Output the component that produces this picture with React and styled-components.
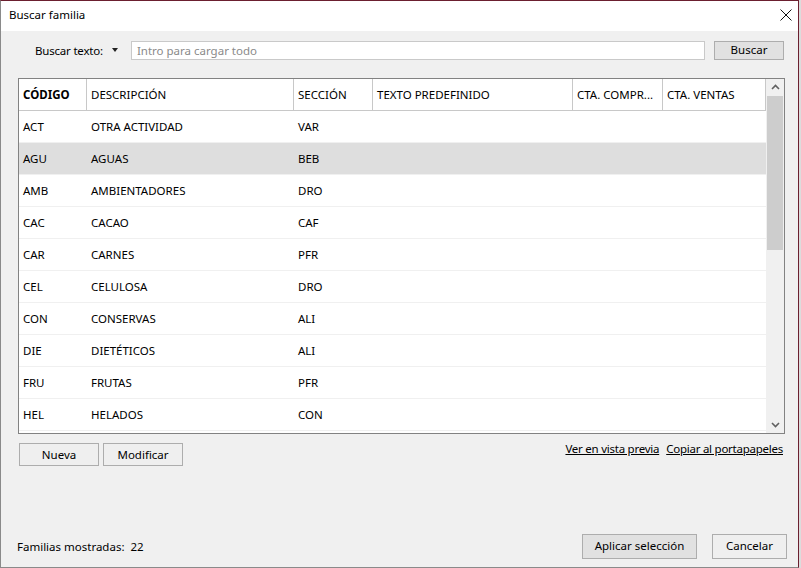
import React from 'react'
import styled, { createGlobalStyle } from 'styled-components'

const GlobalStyle = createGlobalStyle`
  html, body { margin: 0; padding: 0; background: #dcdcdc; }
  body { font-family: "Noto Sans", "Open Sans", sans-serif; font-size: 12px; color: #000; }
  * { box-sizing: border-box; }
`

const Window = styled.div`
  width: 799px;
  height: 568px;
  display: flex;
  flex-direction: column;
  background: #f0f0f0;
  border-left: 1px solid #8a8a8a;
  border-bottom: 1px solid #8a8a8a;
  border-top: 1px solid #6b1f2f;
  border-right: 1px solid #6b1f2f;
`

const TitleBar = styled.div`
  height: 30px;
  flex: none;
  background: #fff;
  display: flex;
  align-items: center;
  justify-content: space-between;
  padding: 0 6px 3px 8px;
  font-size: 11.5px;
`

const Close = styled.svg`
  width: 12px;
  height: 12px;
`

const Body = styled.div`
  flex: 1;
  display: flex;
  flex-direction: column;
  padding: 9px 12px 0 17px;
`

const SearchRow = styled.div`
  display: flex;
  align-items: center;
  height: 20px;
  padding-left: 17px;
  margin-bottom: 18px;
  margin-right: 2px;
`

const Label = styled.span`
  font-size: 11.5px;
  letter-spacing: -0.2px;
  margin-right: 9px;
`

const Caret = styled.span`
  width: 0;
  height: 0;
  border-left: 3px solid transparent;
  border-right: 3px solid transparent;
  border-top: 4px solid #222;
  margin-right: 13px;
`

const Input = styled.div`
  flex: 1;
  height: 19px;
  background: #fff;
  border: 1px solid #c9c9c9;
  display: flex;
  align-items: center;
  padding-left: 5px;
  color: #8a8a8a;
  font-size: 11.5px;
  margin-right: 9px;
`

const Button = styled.button`
  font-family: inherit;
  font-size: 11.5px;
  line-height: 1;
  color: #000;
  height: ${({ h }) => h || 22}px;
  width: ${({ w }) => w}px;
  flex: none;
  padding: 0;
  background: ${({ primary }) => (primary ? '#e1e1e1' : '#efefef')};
  border: 1px solid #adadad;
  display: flex;
  align-items: center;
  justify-content: center;
  margin-left: ${({ ml }) => ml || 0}px;
`

const Table = styled.div`
  height: 356px;
  border: 1px solid #828282;
  background: #fff;
  display: flex;
  overflow: hidden;
  margin-right: 1px;
`

const Grid = styled.div`
  flex: 1;
  display: flex;
  flex-direction: column;
`

const cols = '67px 207px 79px 200px 90px 1fr'

const HeadRow = styled.div`
  display: grid;
  grid-template-columns: ${cols};
  height: 32px;
  flex: none;
  border-bottom: 1px solid #c8c8c8;
  border-right: 1px solid #c8c8c8;
`

const HeadCell = styled.div`
  display: flex;
  align-items: center;
  padding-left: 4px;
  font-size: 11.5px;
  font-weight: ${({ bold }) => (bold ? 700 : 400)};
  border-left: ${({ first }) => (first ? 'none' : '1px solid #c8c8c8')};
  white-space: nowrap;
  overflow: hidden;
`

const Row = styled.div`
  display: grid;
  grid-template-columns: ${cols};
  height: 32px;
  flex: none;
  background: ${({ selected }) => (selected ? '#dedede' : '#fff')};
  border-bottom: 1px solid #f0f0f0;
`

const Cell = styled.div`
  display: flex;
  align-items: center;
  padding-left: ${({ first }) => (first ? 4 : 5)}px;
  font-size: 11.5px;
  white-space: nowrap;
`

const Scrollbar = styled.div`
  width: 18px;
  flex: none;
  background: #f0f0f0;
  display: flex;
  flex-direction: column;
  align-items: center;
`

const Arrow = styled.svg`
  width: 17px;
  height: 17px;
  flex: none;
`

const Track = styled.div`
  flex: 1;
  width: 100%;
  display: flex;
  flex-direction: column;
  align-items: center;
`

const Thumb = styled.div`
  width: 16px;
  height: 154px;
  background: #cdcdcd;
`

const ActionRow = styled.div`
  display: flex;
  align-items: flex-start;
  margin-top: 9px;
  padding-left: 1px;
  gap: 4px;
`

const Links = styled.div`
  margin-left: auto;
  display: flex;
  gap: 7px;
  margin-right: 3px;
  margin-top: -2px;
`

const Link = styled.span`
  text-decoration: underline;
  font-size: 11.5px;
  letter-spacing: -0.25px;
  color: #000;
`

const Footer = styled.div`
  margin-top: auto;
  display: flex;
  align-items: center;
  height: 24px;
  margin-bottom: 9px;
  margin-right: -1px;
`

const Count = styled.span`
  font-size: 11.5px;
  margin-left: -1px;
  margin-right: auto;
`

const rows = [
  ['ACT', 'OTRA ACTIVIDAD', 'VAR'],
  ['AGU', 'AGUAS', 'BEB'],
  ['AMB', 'AMBIENTADORES', 'DRO'],
  ['CAC', 'CACAO', 'CAF'],
  ['CAR', 'CARNES', 'PFR'],
  ['CEL', 'CELULOSA', 'DRO'],
  ['CON', 'CONSERVAS', 'ALI'],
  ['DIE', 'DIETÉTICOS', 'ALI'],
  ['FRU', 'FRUTAS', 'PFR'],
  ['HEL', 'HELADOS', 'CON'],
  ['', '', ''],
]

const headers = ['CÓDIGO', 'DESCRIPCIÓN', 'SECCIÓN', 'TEXTO PREDEFINIDO', 'CTA. COMPR...', 'CTA. VENTAS']

export default function App() {
  return (
    <>
      <GlobalStyle />
      <Window>
        <TitleBar>
          <span>Buscar familia</span>
          <Close viewBox="0 0 12 12">
            <path d="M0.5 0.5 L11.5 11.5 M11.5 0.5 L0.5 11.5" stroke="#111" strokeWidth="1" />
          </Close>
        </TitleBar>
        <Body>
          <SearchRow>
            <Label>Buscar texto:</Label>
            <Caret />
            <Input>Intro para cargar todo</Input>
            <Button primary w={70} h={19}>Buscar</Button>
          </SearchRow>
          <Table>
            <Grid>
              <HeadRow>
                {headers.map((h, i) => (
                  <HeadCell key={h} first={i === 0} bold={i === 0}>{h}</HeadCell>
                ))}
              </HeadRow>
              {rows.map((r, i) => (
                <Row key={i} selected={i === 1}>
                  <Cell first>{r[0]}</Cell>
                  <Cell>{r[1]}</Cell>
                  <Cell>{r[2]}</Cell>
                  <Cell />
                  <Cell />
                  <Cell />
                </Row>
              ))}
            </Grid>
            <Scrollbar>
              <Arrow viewBox="0 0 17 17">
                <path d="M5 10 L8.5 6.5 L12 10" fill="none" stroke="#606060" strokeWidth="1.6" />
              </Arrow>
              <Track>
                <Thumb />
              </Track>
              <Arrow viewBox="0 0 17 17">
                <path d="M5 7 L8.5 10.5 L12 7" fill="none" stroke="#606060" strokeWidth="1.6" />
              </Arrow>
            </Scrollbar>
          </Table>
          <ActionRow>
            <Button w={80} h={23}>Nueva</Button>
            <Button w={80} h={23}>Modificar</Button>
            <Links>
              <Link>Ver en vista previa</Link>
              <Link>Copiar al portapapeles</Link>
            </Links>
          </ActionRow>
          <Footer>
            <Count>Familias mostradas:&nbsp;&nbsp;22</Count>
            <Button primary w={115} h={25}>Aplicar selección</Button>
            <Button w={75} h={25} ml={15}>Cancelar</Button>
          </Footer>
        </Body>
      </Window>
    </>
  )
}
